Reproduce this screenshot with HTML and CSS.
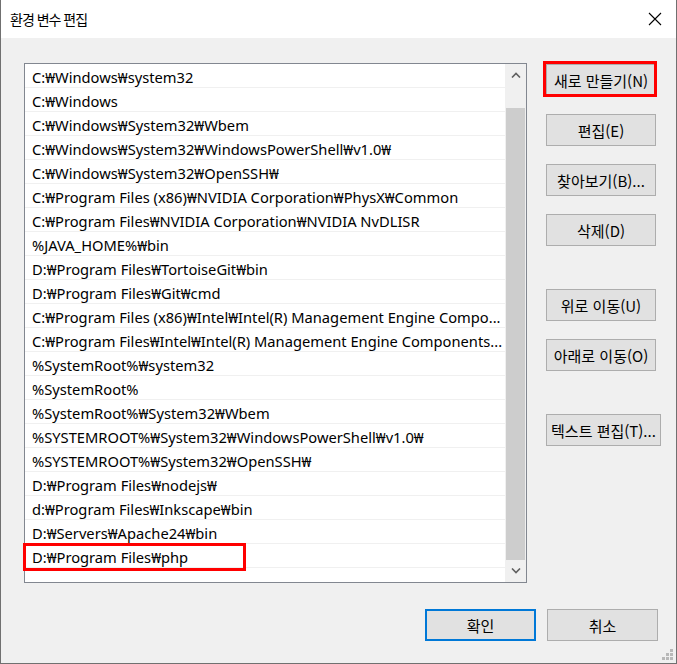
FILE: index.html
```html
<!DOCTYPE html>
<html lang="ko">
<head>
<meta charset="utf-8">
<link rel="stylesheet" href="styles.css">
</head>
<body>
<div class="window">
  <div class="titlebar">
    <span class="title">환경 변수 편집</span>
    <span class="close">
      <svg width="14" height="14" viewBox="0 0 14 14"><path d="M1 1 L13 13 M13 1 L1 13" stroke="#000" stroke-width="1.1" fill="none"/></svg>
    </span>
  </div>
  <div class="body">
    <div class="main">
      <div class="listbox">
        <div class="rows">
          <div class="row">C:₩Windows₩system32</div>
          <div class="row">C:₩Windows</div>
          <div class="row">C:₩Windows₩System32₩Wbem</div>
          <div class="row">C:₩Windows₩System32₩WindowsPowerShell₩v1.0₩</div>
          <div class="row">C:₩Windows₩System32₩OpenSSH₩</div>
          <div class="row">C:₩Program Files (x86)₩NVIDIA Corporation₩PhysX₩Common</div>
          <div class="row">C:₩Program Files₩NVIDIA Corporation₩NVIDIA NvDLISR</div>
          <div class="row">%JAVA_HOME%₩bin</div>
          <div class="row">D:₩Program Files₩TortoiseGit₩bin</div>
          <div class="row">D:₩Program Files₩Git₩cmd</div>
          <div class="row">C:₩Program Files (x86)₩Intel₩Intel(R) Management Engine Compo...</div>
          <div class="row">C:₩Program Files₩Intel₩Intel(R) Management Engine Components...</div>
          <div class="row">%SystemRoot%₩system32</div>
          <div class="row">%SystemRoot%</div>
          <div class="row">%SystemRoot%₩System32₩Wbem</div>
          <div class="row">%SYSTEMROOT%₩System32₩WindowsPowerShell₩v1.0₩</div>
          <div class="row">%SYSTEMROOT%₩System32₩OpenSSH₩</div>
          <div class="row">D:₩Program Files₩nodejs₩</div>
          <div class="row">d:₩Program Files₩Inkscape₩bin</div>
          <div class="row">D:₩Servers₩Apache24₩bin</div>
          <div class="row marked">D:₩Program Files₩php<span class="redbox row-mark"></span></div>
        </div>
        <div class="scrollbar">
          <div class="sb-up">
            <svg width="10" height="6" viewBox="0 0 10 6"><path d="M1 5.5 L5 1.5 L9 5.5" stroke="#606060" stroke-width="1.6" fill="none"/></svg>
          </div>
          <div class="sb-track"><div class="sb-thumb"></div></div>
          <div class="sb-down">
            <svg width="10" height="6" viewBox="0 0 10 6"><path d="M1 0.5 L5 4.5 L9 0.5" stroke="#606060" stroke-width="1.6" fill="none"/></svg>
          </div>
        </div>
      </div>
      <div class="buttons">
        <button class="btn marked-btn">새로 만들기(N)<span class="redbox btn-mark"></span></button>
        <button class="btn gap18">편집(E)</button>
        <button class="btn gap18">찾아보기(B)...</button>
        <button class="btn gap18">삭제(D)</button>
        <button class="btn gap43">위로 이동(U)</button>
        <button class="btn gap18">아래로 이동(O)</button>
        <button class="btn gap43 wide">텍스트 편집(T)...</button>
      </div>
    </div>
    <div class="footer">
      <button class="btn fbtn ok">확인</button>
      <button class="btn fbtn">취소</button>
    </div>
    <div class="grip">
      <svg width="12" height="12" viewBox="0 0 12 12" fill="#b8b8b8">
        <rect x="8" y="0" width="3" height="3"/>
        <rect x="4" y="4" width="3" height="3"/><rect x="8" y="4" width="3" height="3"/>
        <rect x="0" y="8" width="3" height="3"/><rect x="4" y="8" width="3" height="3"/><rect x="8" y="8" width="3" height="3"/>
      </svg>
    </div>
  </div>
</div>
</body>
</html>
```

FILE: styles.css
```css
* { box-sizing: border-box; }
html, body { margin: 0; padding: 0; background: #f0f0f0; }
body {
  font-family: "Noto Sans", "Noto Sans CJK KR", sans-serif;
  font-size: 15px;
  color: #000;
}
.window {
  width: 677px;
  height: 664px;
  border-left: 1px solid #707070;
  border-right: 1px solid #707070;
  border-bottom: 1px solid #707070;
  background: #f0f0f0;
  display: flex;
  flex-direction: column;
  position: relative;
}
.titlebar {
  height: 38px;
  background: #fff;
  display: flex;
  align-items: center;
  justify-content: space-between;
  padding-left: 9px;
  padding-right: 14px;
  flex: none;
}
.title {
  font-family: "Noto Sans CJK KR", sans-serif;
  font-size: 14px;
  letter-spacing: -1px;
  line-height: 1;
  margin-top: 0;
}
.close { display: flex; align-items: center; height: 14px; }
.body {
  flex: 1;
  padding: 25px 18px 0 23px;
  display: flex;
  flex-direction: column;
}
.main {
  display: flex;
  gap: 19px;
}
.listbox {
  width: 504px;
  height: 520px;
  border: 1px solid #828790;
  background: #fff;
  display: flex;
}
.rows {
  width: 480px;
  display: flex;
  flex-direction: column;
}
.row {
  height: 24px;
  border-bottom: 1px solid #f0f0f0;
  padding-left: 7px;
  padding-top: 3px;
  line-height: 20px;
  font-size: 14.7px;
  white-space: nowrap;
  overflow: hidden;
  position: relative;
}
.row.marked { overflow: visible; }
.redbox {
  position: absolute;
  border: 3px solid #ff0000;
  pointer-events: none;
}
.row-mark {
  left: -2px;
  top: -1px;
  width: 223px;
  height: 28px;
}
.scrollbar {
  width: 21px;
  background: #f0f0f0;
  display: flex;
  flex-direction: column;
}
.sb-up { height: 44px; display: flex; justify-content: center; padding-top: 8px; }
.sb-track { flex: 1; display: flex; }
.sb-thumb { flex: 1; background: #cdcdcd; margin: 0 1px 0 1px; }
.sb-down { height: 22px; display: flex; justify-content: center; padding-top: 8px; }
.buttons {
  display: flex;
  flex-direction: column;
  align-items: flex-start;
  padding-top: 1px;
}
.btn {
  font-family: "Noto Sans CJK KR", sans-serif;
  font-size: 15px;
  color: #000;
  width: 110px;
  height: 32px;
  background: #e1e1e1;
  border: 1px solid #adadad;
  padding: 0;
  display: flex;
  align-items: center;
  justify-content: center;
  white-space: nowrap;
  position: relative;
}
.gap18 { margin-top: 18px; }
.gap43 { margin-top: 43px; }
.wide { width: 115px; }
.btn-mark { left: -4px; top: -4px; right: -2px; bottom: -2px; }
.footer {
  display: flex;
  justify-content: flex-end;
  gap: 11px;
  margin-top: 26px;
}
.fbtn { width: 111px; }
.ok { border: 2px solid #0078d7; }
.grip {
  position: absolute;
  right: 2px;
  bottom: 2px;
  line-height: 0;
}
```
